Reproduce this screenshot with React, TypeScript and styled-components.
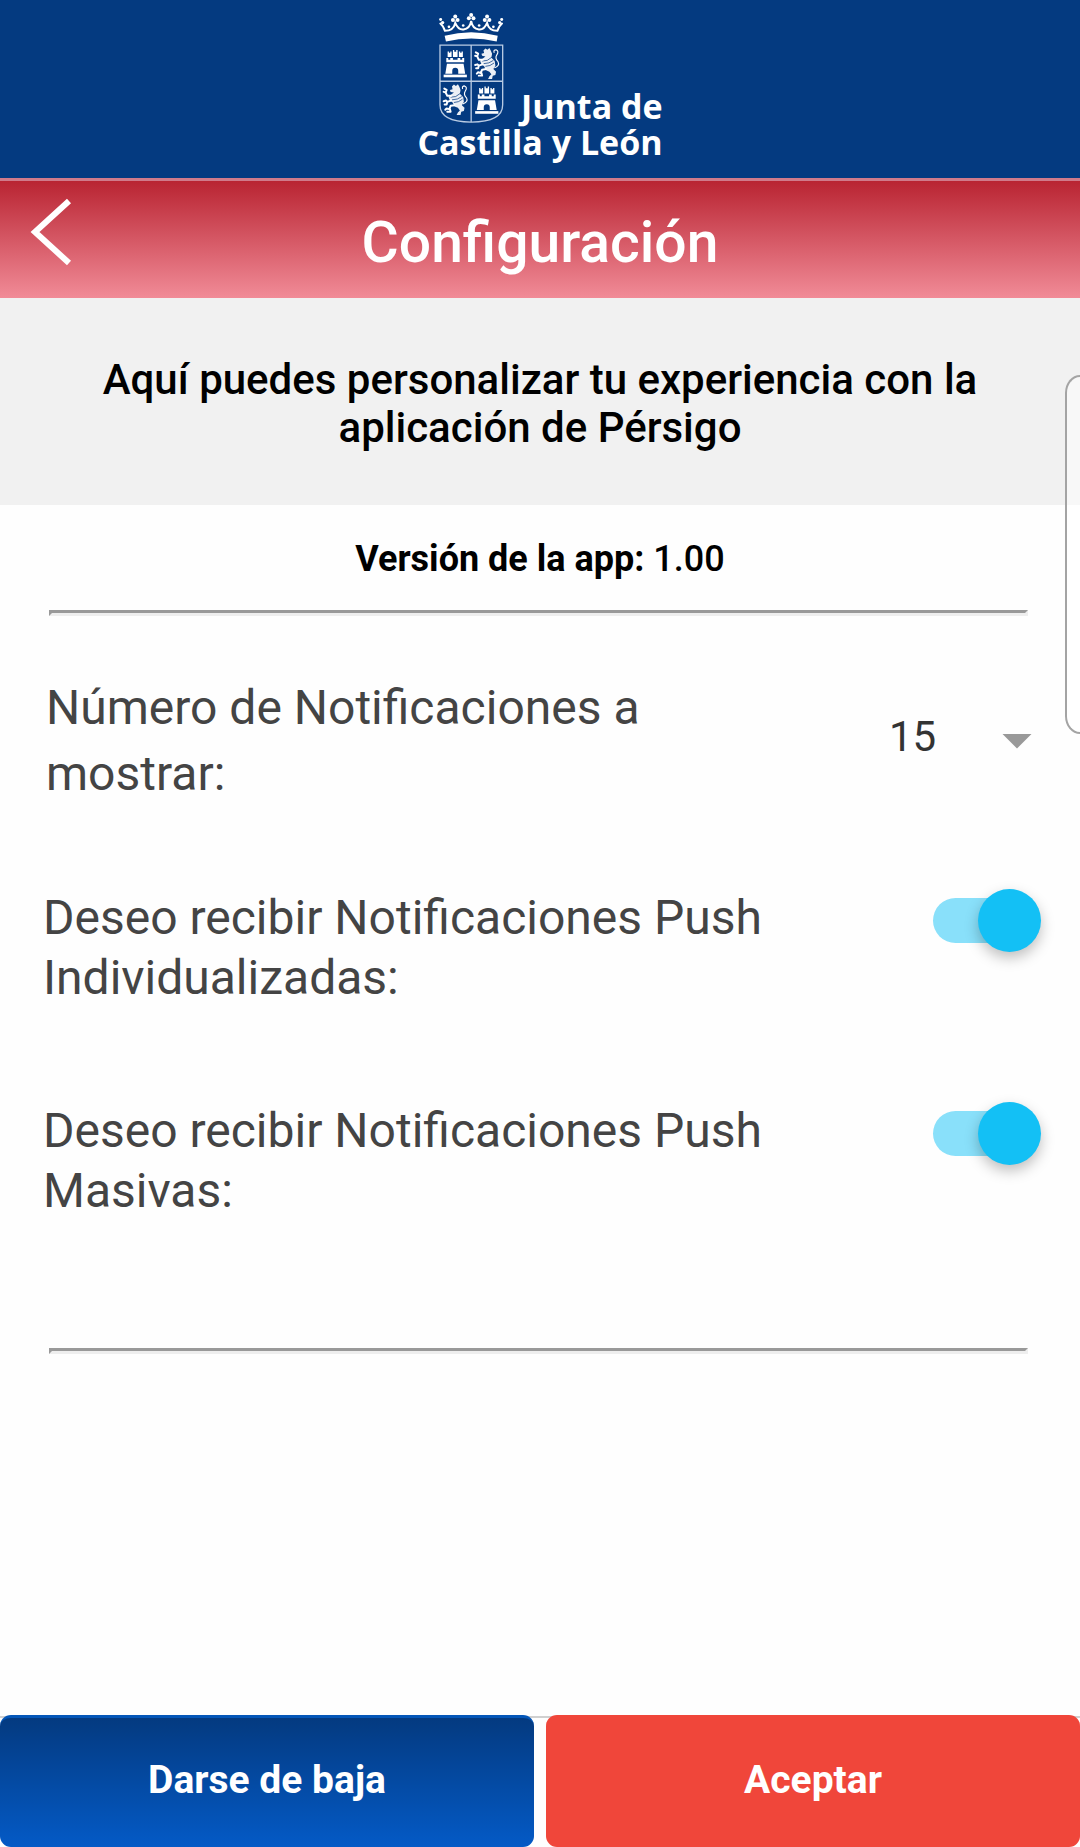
import React, { useState } from "react";
import styled, { createGlobalStyle } from "styled-components";

const GlobalStyle = createGlobalStyle`
  *, *::before, *::after { box-sizing: border-box; }
  body {
    margin: 0;
    background: #fefefe;
    font-family: Roboto, "Liberation Sans", sans-serif;
  }
  button, select, input { font-family: inherit; }
`;

const Page = styled.div`
  display: flex;
  flex-direction: column;
  min-height: 100vh;
  overflow-x: hidden;
`;

const Brand = styled.header`
  display: flex;
  justify-content: center;
  padding: 12px 16px 18px;
  background: #043a80;
`;

const Logo = styled.div`
  display: flex;
  flex-direction: column;
  align-items: flex-end;
  color: #fff;
  font-family: "Open Sans", "Noto Sans", sans-serif;
  font-size: 34px;
  font-weight: 700;
  line-height: 36px;
`;

const LogoTop = styled.div`
  display: flex;
  align-items: flex-end;
  gap: 16px;
`;

const TitleBar = styled.div`
  display: grid;
  grid-template-columns: 1fr auto 1fr;
  align-items: start;
  padding: 16px 28px 22px;
  border-top: 3px solid #d07a8a;
  background: linear-gradient(#b92432, #f18b97) padding-box;
`;

const BackButton = styled.button`
  justify-self: start;
  display: flex;
  padding: 0;
  border: 0;
  background: none;
  cursor: pointer;
`;

const Title = styled.h1`
  margin: 0;
  padding-top: 13px;
  color: #fff;
  font-size: 57px;
  font-weight: 500;
  line-height: 66px;
`;

const Intro = styled.p`
  margin: 0;
  padding: 58px 80px 53px;
  background: #f1f1f1;
  color: #000;
  font-size: 42px;
  font-weight: 500;
  line-height: 48px;
  text-align: center;
`;

const Settings = styled.main`
  flex: 1;
  padding: 33px 39px;
`;

const Version = styled.p`
  margin: 0 0 29px;
  font-size: 36px;
  font-weight: 500;
  line-height: 43px;
  text-align: center;
`;

const Divider = styled.hr`
  height: 6px;
  margin: 0 13px 0 10px;
  border: 3px solid;
  border-color: #999 #eee #eee #999;
`;

const Row = styled.div<{ $tall?: boolean }>`
  display: flex;
  justify-content: space-between;
  align-items: ${(p) => (p.$tall ? "center" : "flex-start")};
  padding: ${(p) => (p.$tall ? "59px 9px 0 7px" : "0 0 93px 4px")};
`;

const Label = styled.label<{ $tall?: boolean }>`
  max-width: 740px;
  color: #444;
  font-size: 48px;
  line-height: ${(p) => (p.$tall ? 66 : 60)}px;
`;

const Toggles = styled.div`
  padding: 81px 0 34px;
`;

const SelectWrap = styled.div`
  display: flex;
  align-items: center;
`;

const Select = styled.select`
  appearance: none;
  width: 143px;
  padding: 0 0 8px;
  border: 0;
  background: transparent;
  color: #333;
  font-size: 42px;
  line-height: 48px;
`;

const Arrow = styled.span`
  width: 30px;
  height: 15px;
  margin-left: -30px;
  background: #999;
  clip-path: polygon(0 0, 100% 0, 50% 100%);
  pointer-events: none;
`;

const Switch = styled.input`
  appearance: none;
  position: relative;
  flex: none;
  width: 100px;
  height: 45px;
  margin: 10px 8px 0 0;
  border-radius: 23px;
  background: #ccc;
  cursor: pointer;

  &::before {
    content: "";
    position: absolute;
    top: -9px;
    left: -8px;
    width: 63px;
    height: 63px;
    border-radius: 50%;
    background: #fff;
    box-shadow: 0 6px 14px rgba(0, 0, 0, 0.25);
  }

  &:checked {
    background: #89e0fa;
  }

  &:checked::before {
    left: 45px;
    background: #13c0f5;
  }
`;

const Actions = styled.footer`
  display: grid;
  grid-template-columns: 1fr 1fr;
  gap: 12px;
  background: linear-gradient(#d0d0d0, #d0d0d0) 0 1px / 100% 2px no-repeat;
`;

const Action = styled.button<{ $primary?: boolean }>`
  padding: 39px 16px 43px;
  border: 0;
  border-top: 3px solid ${(p) => (p.$primary ? "#f0463a" : "#0456b8")};
  border-radius: 11px;
  background: ${(p) =>
    p.$primary ? "#f0463a" : "linear-gradient(#043a80, #045ac6)"};
  color: #fff;
  font-size: 39px;
  font-weight: 700;
  line-height: 47px;
  cursor: pointer;
`;

/* Edge panel handle that floats over the right side of the screen */
const EdgeHandle = styled.div`
  position: absolute;
  top: 375px;
  right: 0;
  width: 15px;
  height: 359px;
  border: 2px solid #a4a4a4;
  border-right: 0;
  border-radius: 20px 0 0 20px / 24px 0 0 24px;
  background: rgba(255, 255, 255, 0.5);
`;

const Castle = ({ x, y }: { x: number; y: number }) => (
  <g transform={`translate(${x} ${y})`} fill="#fff">
    <path d="M0 74H70V82H0Z" />
    <path d="M10 41H60L65 71H44V62Q44 53 35 53Q26 53 26 62V71H5Z" />
    <path d="M8 24H14V29H20V24H28V29H42V24H50V29H56V24H62V37H8Z" />
    <path d="M12 4H16V8H20V4H24V21H12ZM46 4H50V8H54V4H58V21H46ZM28 0H32V5H38V0H42V21H28Z" />
  </g>
);

const Lion = ({ x, y }: { x: number; y: number }) => (
  <g transform={`translate(${x} ${y})`}>
    <path
      d="M28 8L34 2L40 6L46 1L50 8L54 18L52 30L62 40L64 54L58 64L66 72L64 82L56 84L54 94H42L46 86L52 80L46 72L36 68L30 56L22 50L18 40L26 32L34 26L24 24L22 18L30 16Z"
      fill="#fff"
      fillOpacity="0.92"
    />
    <path
      d="M24 40Q40 42 54 28M28 48Q46 48 58 38M34 56Q48 56 60 46"
      stroke="#043a80"
      strokeWidth="2.2"
      fill="none"
    />
    <g fill="none" stroke="#fff" strokeLinejoin="round" strokeLinecap="round">
      <path
        d="M26 36L14 36L9 26L12 18L5 14M10 26L3 24M26 50L14 54L10 50L3 52M14 54L12 62L6 62M36 64L24 66L20 76L12 74L8 78M22 76L24 84L14 84"
        strokeWidth="6"
      />
      <path
        d="M62 60Q78 54 72 42Q62 32 68 22Q76 10 66 6Q58 6 60 14"
        strokeWidth="3.4"
      />
    </g>
  </g>
);

const Crest = () => (
  <svg width="67" height="112" viewBox="113 36 202 336" aria-hidden="true">
    <path d="M133 107Q213 85 293 107L290 124Q213 106 137 124Z" fill="#fff" />
    <g fill="none" stroke="#fff" strokeWidth="6" strokeLinecap="round">
      <path d="M120 70Q128 76 134 92Q160 92 165 68Q174 90 190 88Q209 86 213 62Q217 86 236 88Q252 90 261 68Q266 92 292 92Q298 76 306 70" />
    </g>
    <g fill="#fff">
      <circle cx="165" cy="49" r="6" />
      <circle cx="158" cy="59" r="6" />
      <circle cx="172" cy="59" r="6" />
      <circle cx="213" cy="44" r="6" />
      <circle cx="206" cy="54" r="6" />
      <circle cx="220" cy="54" r="6" />
      <circle cx="261" cy="49" r="6" />
      <circle cx="254" cy="59" r="6" />
      <circle cx="268" cy="59" r="6" />
      <circle cx="121" cy="58" r="4.5" />
      <circle cx="127" cy="67" r="5" />
      <circle cx="305" cy="58" r="4.5" />
      <circle cx="299" cy="67" r="5" />
      <circle cx="189" cy="76" r="4" />
      <circle cx="237" cy="76" r="4" />
      <circle cx="146" cy="80" r="4" />
      <circle cx="280" cy="80" r="4" />
    </g>
    <g fill="none" stroke="#b9cbe3" strokeWidth="4">
      <path d="M119 135H308V315C308 352 270 367 213 367C157 367 119 352 119 315Z" />
      <path d="M213 135V367M119 244H308" />
    </g>
    <Castle x={130} y={150} />
    <Castle x={225} y={260} />
    <Lion x={222} y={143} />
    <Lion x={127} y={252} />
  </svg>
);

export default function App() {
  const [count, setCount] = useState("15");
  const [individual, setIndividual] = useState(true);
  const [mass, setMass] = useState(true);

  return (
    <Page>
      <GlobalStyle />
      <Brand>
        <Logo>
          <LogoTop>
            <Crest />
            <span>Junta de</span>
          </LogoTop>
          <span>Castilla y León</span>
        </Logo>
      </Brand>
      <TitleBar>
        <BackButton type="button" aria-label="Volver">
          <svg width="46" height="70" viewBox="0 0 46 70" aria-hidden="true">
            <path
              d="M41 4L7 35L41 66"
              fill="none"
              stroke="#fff"
              strokeWidth="6"
            />
          </svg>
        </BackButton>
        <Title>Configuración</Title>
      </TitleBar>
      <Intro>
        Aquí puedes personalizar tu experiencia con la aplicación de Pérsigo
      </Intro>
      <Settings>
        <Version>
          <b>Versión de la app:</b> 1.00
        </Version>
        <Divider />
        <Row $tall>
          <Label $tall htmlFor="count">
            Número de Notificaciones a<br />
            mostrar:
          </Label>
          <SelectWrap>
            <Select
              id="count"
              value={count}
              onChange={(e) => setCount(e.target.value)}
            >
              <option>5</option>
              <option>10</option>
              <option>15</option>
              <option>20</option>
            </Select>
            <Arrow />
          </SelectWrap>
        </Row>
        <Toggles>
          <Row>
            <Label htmlFor="individual">
              Deseo recibir Notificaciones Push Individualizadas:
            </Label>
            <Switch
              id="individual"
              type="checkbox"
              checked={individual}
              onChange={(e) => setIndividual(e.target.checked)}
            />
          </Row>
          <Row>
            <Label htmlFor="mass">
              Deseo recibir Notificaciones Push Masivas:
            </Label>
            <Switch
              id="mass"
              type="checkbox"
              checked={mass}
              onChange={(e) => setMass(e.target.checked)}
            />
          </Row>
        </Toggles>
        <Divider />
      </Settings>
      <Actions>
        <Action type="button">Darse de baja</Action>
        <Action type="button" $primary>
          Aceptar
        </Action>
      </Actions>
      <EdgeHandle />
    </Page>
  );
}
